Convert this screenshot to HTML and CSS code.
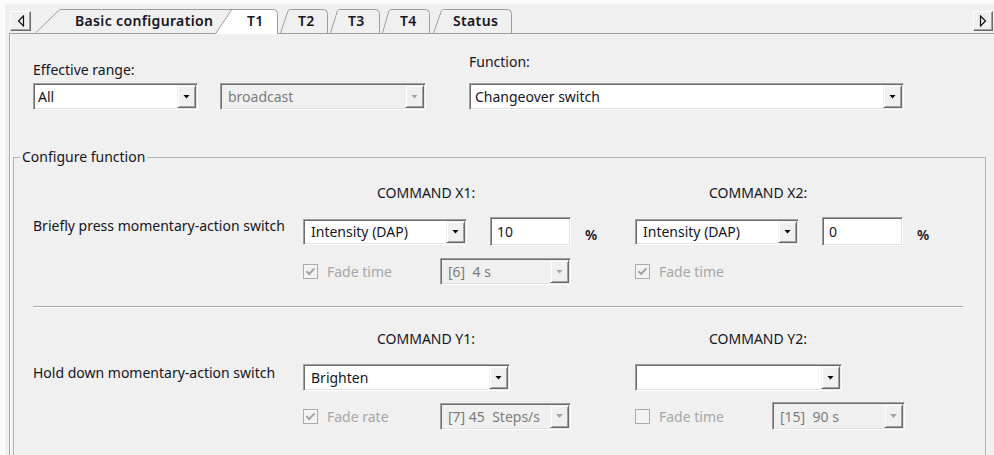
FILE: index.html
```html
<!DOCTYPE html>
<html lang="en">
<head>
<meta charset="utf-8">
<title>T1 – Configure function</title>
<link rel="stylesheet" href="styles.css">
</head>
<body>
<div class="window">
  <div class="tabstrip">
    <div class="scroll-btn scroll-left">
      <svg width="8" height="12" viewBox="0 0 8 12"><path d="M6.5 1 L1.5 6 L6.5 11 Z" fill="none" stroke="#111" stroke-width="1.2"/></svg>
    </div>
    <div class="tabs">
      <div class="tab tab-basic">
        <svg class="tab-shape" width="210" height="24" viewBox="0 0 210 24"><path d="M0.5 24 L23.5 1.6 Q24.6 0.5 26 0.5 H205.5 Q209.5 0.5 209.5 4.5 V24" fill="#f0f0f0" stroke="#9d9d9d"/></svg>
        <span class="tab-text">Basic configuration</span>
      </div>
      <div class="tab tab-t1 active">
        <svg class="tab-shape" width="63" height="25" viewBox="0 0 63 25"><path d="M0.5 25 L16 1.6 Q16.8 0.5 18.2 0.5 H58.5 Q62.5 0.5 62.5 4.5 V25" fill="#ffffff" stroke="#9d9d9d"/></svg>
        <span class="tab-text">T1</span>
      </div>
      <div class="tab tab-t2">
        <svg class="tab-shape" width="48" height="24" viewBox="0 0 48 24"><path d="M0.5 24 L8.2 1.6 Q9 0.5 10.4 0.5 H43.5 Q47.5 0.5 47.5 4.5 V24" fill="#f0f0f0" stroke="#9d9d9d"/></svg>
        <span class="tab-text">T2</span>
      </div>
      <div class="tab tab-t3">
        <svg class="tab-shape" width="50" height="24" viewBox="0 0 50 24"><path d="M0.5 24 L7.5 1.6 Q8.3 0.5 9.7 0.5 H45.5 Q49.5 0.5 49.5 4.5 V24" fill="#f0f0f0" stroke="#9d9d9d"/></svg>
        <span class="tab-text">T3</span>
      </div>
      <div class="tab tab-t4">
        <svg class="tab-shape" width="48" height="24" viewBox="0 0 48 24"><path d="M0.5 24 L7 1.6 Q7.8 0.5 9.2 0.5 H43.5 Q47.5 0.5 47.5 4.5 V24" fill="#f0f0f0" stroke="#9d9d9d"/></svg>
        <span class="tab-text">T4</span>
      </div>
      <div class="tab tab-status">
        <svg class="tab-shape" width="79" height="24" viewBox="0 0 79 24"><path d="M0.5 24 L8.5 1.6 Q9.3 0.5 10.7 0.5 H74.5 Q78.5 0.5 78.5 4.5 V24" fill="#f0f0f0" stroke="#9d9d9d"/></svg>
        <span class="tab-text">Status</span>
      </div>
    </div>
    <div class="scroll-btn scroll-right">
      <svg width="8" height="12" viewBox="0 0 8 12"><path d="M1.5 1 L6.5 6 L1.5 11 Z" fill="none" stroke="#111" stroke-width="1.2"/></svg>
    </div>
  </div>

  <div class="panel">
    <div class="scope-row">
      <div class="field field-range">
        <div class="field-label">Effective range:</div>
        <div class="field-controls">
          <div class="combo combo-range"><span class="combo-value">All</span><span class="combo-btn"></span></div>
          <div class="combo combo-disabled combo-address"><span class="combo-value">broadcast</span><span class="combo-btn"></span></div>
        </div>
      </div>
      <div class="field field-function">
        <div class="field-label">Function:</div>
        <div class="combo combo-function"><span class="combo-value">Changeover switch</span><span class="combo-btn"></span></div>
      </div>
    </div>

    <fieldset class="group">
      <legend>Configure function</legend>
      <div class="cmd-grid">
        <div class="cmd-title col-a">COMMAND X1:</div>
        <div class="cmd-title col-b">COMMAND X2:</div>

        <div class="row-label">Briefly press momentary-action switch</div>
        <div class="cmd col-a">
          <div class="cmd-main">
            <div class="combo combo-cmd"><span class="combo-value">Intensity (DAP)</span><span class="combo-btn"></span></div>
            <div class="edit">10</div>
            <span class="unit">%</span>
          </div>
          <div class="cmd-opt">
            <div class="check disabled">
              <svg width="15" height="15" viewBox="0 0 15 15"><rect x="0.5" y="0.5" width="14" height="14" fill="#f3f3f3" stroke="#ababab"/><path d="M3.5 7.2 L6.2 10 L11.5 4.4" fill="none" stroke="#a3a3a3" stroke-width="2"/></svg>
              <span>Fade time</span>
            </div>
            <div class="combo combo-disabled combo-opt"><span class="combo-value">[6]  4 s</span><span class="combo-btn"></span></div>
          </div>
        </div>
        <div class="cmd col-b">
          <div class="cmd-main">
            <div class="combo combo-cmd"><span class="combo-value">Intensity (DAP)</span><span class="combo-btn"></span></div>
            <div class="edit">0</div>
            <span class="unit">%</span>
          </div>
          <div class="cmd-opt">
            <div class="check disabled">
              <svg width="15" height="15" viewBox="0 0 15 15"><rect x="0.5" y="0.5" width="14" height="14" fill="#f3f3f3" stroke="#ababab"/><path d="M3.5 7.2 L6.2 10 L11.5 4.4" fill="none" stroke="#a3a3a3" stroke-width="2"/></svg>
              <span>Fade time</span>
            </div>
          </div>
        </div>

        <div class="separator"></div>

        <div class="cmd-title cmd-title-y col-a">COMMAND Y1:</div>
        <div class="cmd-title cmd-title-y col-b">COMMAND Y2:</div>

        <div class="row-label row-label-y">Hold down momentary-action switch</div>
        <div class="cmd cmd-y col-a">
          <div class="cmd-main">
            <div class="combo combo-wide"><span class="combo-value">Brighten</span><span class="combo-btn"></span></div>
          </div>
          <div class="cmd-opt">
            <div class="check disabled">
              <svg width="15" height="15" viewBox="0 0 15 15"><rect x="0.5" y="0.5" width="14" height="14" fill="#f3f3f3" stroke="#ababab"/><path d="M3.5 7.2 L6.2 10 L11.5 4.4" fill="none" stroke="#a3a3a3" stroke-width="2"/></svg>
              <span>Fade rate</span>
            </div>
            <div class="combo combo-disabled combo-opt"><span class="combo-value">[7] 45  Steps/s</span><span class="combo-btn"></span></div>
          </div>
        </div>
        <div class="cmd cmd-y col-b">
          <div class="cmd-main">
            <div class="combo combo-wide"><span class="combo-value"></span><span class="combo-btn"></span></div>
          </div>
          <div class="cmd-opt">
            <div class="check disabled">
              <svg width="15" height="15" viewBox="0 0 15 15"><rect x="0.5" y="0.5" width="14" height="14" fill="#f3f3f3" stroke="#ababab"/></svg>
              <span>Fade time</span>
            </div>
            <div class="combo combo-disabled combo-opt combo-opt-wide"><span class="combo-value">[15]  90 s</span><span class="combo-btn"></span></div>
          </div>
        </div>
      </div>
    </fieldset>
  </div>
</div>
</body>
</html>
```

FILE: styles.css
```css
* {
  box-sizing: border-box;
}

html,
body {
  margin: 0;
  height: 100%;
}

body {
  background: #f0f0f0;
  font-family: "Noto Sans", "Open Sans", sans-serif;
  font-size: 14px;
  color: #15151f;
  overflow: hidden;
}

.window {
  height: 100vh;
  border-top: 4px solid #fbfbfb;
  border-left: 5px solid #fbfbfb;
  background: #f0f0f0;
  display: flex;
  flex-direction: column;
}

/* ---------- tab strip ---------- */

.tabstrip {
  display: flex;
  align-items: flex-end;
  height: 30px;
  margin-left: 4px;
  border-bottom: 1px solid #a0a0a0;
  flex: none;
}

.scroll-btn {
  align-self: flex-start;
  margin-top: 7px;
  width: 21px;
  height: 20px;
  display: flex;
  align-items: center;
  justify-content: center;
  background: #f0f0f0;
  border: 1px solid;
  border-color: #ffffff #6a6a6a #6a6a6a #ffffff;
  box-shadow: inset -1px -1px 0 #a0a0a0;
}

.scroll-left {
  margin-left: 1px;
}

.scroll-right {
  margin-left: auto;
  margin-right: 1px;
  width: 20px;
}

.tabs {
  display: flex;
  align-items: flex-end;
  margin-left: 4px;
}

.tab {
  position: relative;
  height: 24px;
  font-weight: 600;
  letter-spacing: 0.35px;
  line-height: 24px;
  white-space: nowrap;
}

.tab-shape {
  position: absolute;
  left: 0;
  top: 0;
}

.tab-text {
  position: relative;
  display: block;
}

.tab.active {
  height: 25px;
  margin-bottom: -1px;
  z-index: 2;
}

.tab-basic {
  width: 210px;
}
.tab-basic .tab-text {
  padding-left: 40px;
}

.tab-t1 {
  width: 63px;
  margin-left: -30px;
}
.tab-t1 .tab-text {
  padding-left: 32px;
}

.tab-t2 {
  width: 48px;
  margin-left: 2px;
  z-index: 1;
}
.tab-t2 .tab-text {
  padding-left: 18px;
}

.tab-t3 {
  width: 50px;
  margin-left: 2px;
  z-index: 1;
}
.tab-t3 .tab-text {
  padding-left: 18px;
}

.tab-t4 {
  width: 48px;
  margin-left: 2px;
  z-index: 1;
}
.tab-t4 .tab-text {
  padding-left: 18px;
}

.tab-status {
  width: 79px;
  margin-left: 3px;
  z-index: 1;
}
.tab-status .tab-text {
  padding-left: 20px;
}

/* ---------- page panel ---------- */

.panel {
  flex: 1;
  margin-left: 4px;
  border-left: 1px solid #a5a5a5;
  box-shadow: inset 1px 0 0 #ffffff;
}

.scope-row {
  display: flex;
  align-items: flex-end;
  padding: 20px 0 0 23px;
}

.field-label {
  line-height: 16px;
  height: 16px;
}

.field-range {
  width: 436px;
}

.field-range .field-label {
  margin-bottom: 5px;
}

.field-function .field-label {
  margin-bottom: 13px;
}

.field-controls {
  display: flex;
}

/* ---------- combo boxes & edits ---------- */

.combo {
  display: flex;
  height: 26px;
  padding: 1px;
  background: #ffffff;
  border: 1px solid;
  border-color: #a0a0a0 #ffffff #ffffff #a0a0a0;
  box-shadow: inset 1px 1px 0 #6d6d6d, inset -1px -1px 0 #e3e3e3;
}

.combo-value {
  flex: 1;
  display: flex;
  align-items: center;
  padding-left: 6px;
  white-space: pre;
  overflow: hidden;
}

.combo-btn {
  flex: none;
  width: 19px;
  display: flex;
  align-items: center;
  justify-content: center;
  background: #f0f0f0;
  border: 1px solid;
  border-color: #f0f0f0 #6a6a6a #6a6a6a #f0f0f0;
  box-shadow: inset 1px 1px 0 #ffffff, inset -1px -1px 0 #a0a0a0;
}

.combo-btn::after {
  content: "";
  width: 7px;
  height: 4px;
  background: #000;
  clip-path: polygon(0 0, 100% 0, 50% 100%);
}

.combo-disabled {
  background: #f0f0f0;
  color: #7c7c7c;
}

.combo-disabled .combo-btn::after {
  background: #a3a3a3;
}

.combo-range {
  width: 165px;
  height: 27px;
}

.combo-range .combo-value {
  padding-left: 3px;
}

.combo-address {
  width: 206px;
  height: 27px;
  margin-left: 22px;
}

.combo-function {
  width: 435px;
  height: 27px;
}

.combo-function .combo-value {
  padding-left: 4px;
}

.combo-cmd {
  width: 164px;
}

.combo-wide {
  width: 207px;
  height: 27px;
}

.combo-opt {
  width: 131px;
  height: 27px;
}

.combo-opt-wide {
  width: 133px;
  height: 28px;
}

.edit {
  width: 81px;
  height: 29px;
  margin-left: 23px;
  padding-left: 6px;
  display: flex;
  align-items: center;
  background: #ffffff;
  border: 1px solid;
  border-color: #a0a0a0 #ffffff #ffffff #a0a0a0;
  box-shadow: inset 1px 1px 0 #6d6d6d, inset -1px -1px 0 #e3e3e3;
}

.unit {
  margin-left: 14px;
  padding-top: 5px;
  font-weight: 600;
}

/* ---------- group box ---------- */

.group {
  margin: 39px 8px 0 3px;
  padding: 20px 0 0 0;
  border: 1px solid #b4b4b4;
  border-bottom: 0;
  min-width: 0;
  height: 306px;
}

.group legend {
  margin-left: 6px;
  padding: 0 2px;
  line-height: 16px;
}

.cmd-grid {
  display: grid;
  grid-template-columns: 270px 332px 1fr;
  margin-left: 19px;
}

.cmd-title {
  padding-left: 74px;
  line-height: 16px;
  height: 16px;
}

.cmd-title.col-a {
  grid-column: 2;
}

.cmd-title.col-b {
  grid-column: 3;
}

.row-label {
  grid-column: 1;
  margin-top: 17px;
  line-height: 16px;
}

.cmd {
  margin-top: 16px;
}

.cmd.col-a {
  grid-column: 2;
}

.cmd.col-b {
  grid-column: 3;
}

.cmd-main {
  display: flex;
  align-items: center;
  height: 29px;
}

.cmd-opt {
  display: flex;
  align-items: center;
  height: 27px;
  margin-top: 12px;
}

.cmd-y .cmd-main {
  height: 27px;
}

.cmd-y .cmd-opt {
  height: 28px;
  margin-top: 11px;
}

.cmd-y {
  margin-top: 17px;
}

.row-label-y {
  margin-top: 18px;
}

.check {
  display: flex;
  align-items: center;
  width: 137px;
}

.check svg {
  flex: none;
}

.check span {
  margin-left: 9px;
}

.check.disabled {
  color: #a6a6a6;
}

.separator {
  grid-column: 1 / -1;
  margin: 21px 22px 0 0;
  height: 2px;
  border-top: 1px solid #a8a8a8;
  border-bottom: 1px solid #ffffff;
}

.cmd-title-y {
  margin-top: 23px;
}
```
